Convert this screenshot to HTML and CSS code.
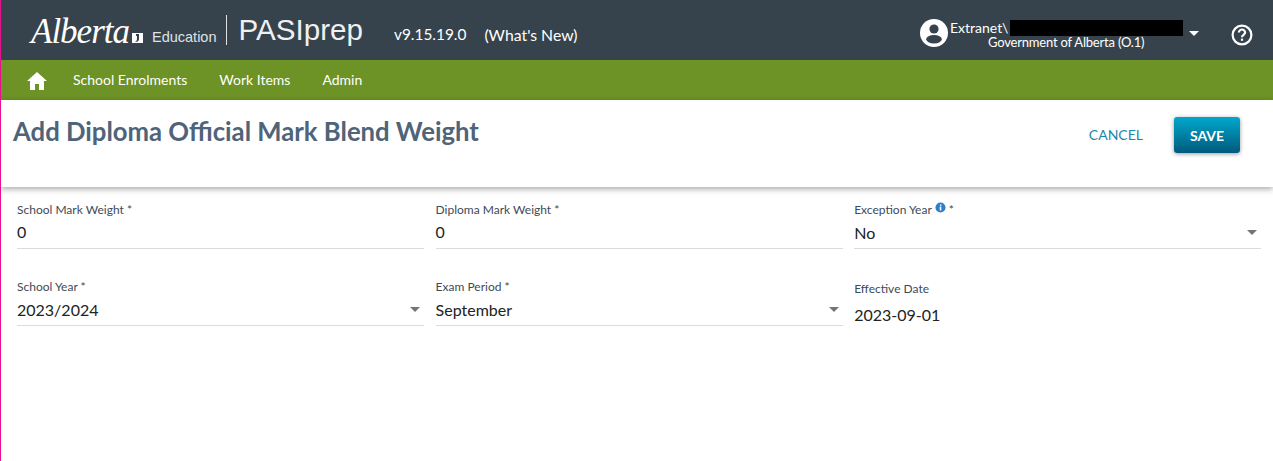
FILE: index.html
```html
<!DOCTYPE html>
<html lang="en">
<head>
  <meta charset="UTF-8" />
  <meta name="viewport" content="width=device-width, initial-scale=1.0" />
  <title>PASIprep</title>
  <link rel="stylesheet" href="styles.css">
</head>
<body>

  <header class="topbar">
    <div class="brand">
      <span class="logo-script">Alberta</span>
      <svg class="logo-mark" viewBox="0 0 11 10">
        <path d="M0 0h11v10H0z" fill="#fff"/>
        <path d="M4 1h3v5q0 3-4 3 2-1 2-3V3H4z" fill="#36434c"/>
      </svg>
      <span class="logo-ministry">Education</span>
      <span class="logo-divider"></span>
      <span class="logo-app">PASIprep</span>
    </div>
    <span class="version">v9.15.19.0</span>
    <span class="whats-new">(What's New)</span>

    <div class="account">
      <svg class="account-icon" viewBox="0 0 28 28">
        <circle cx="14" cy="14" r="14" fill="#fff"/>
        <circle cx="14" cy="10" r="4.6" fill="#36434c"/>
        <ellipse cx="14" cy="20.2" rx="7.8" ry="4.2" fill="#36434c"/>
      </svg>
      <div class="account-text">
        <div class="account-name">Extranet\<span class="redacted"></span></div>
        <div class="account-org">Government of Alberta (O.1)</div>
      </div>
      <span class="account-caret"></span>
    </div>

    <svg class="help-icon" viewBox="0 0 24 24">
      <circle cx="12" cy="12" r="9.4" fill="none" stroke="#fff" stroke-width="2.2"/>
      <path d="M8.9 9.6a3.1 3.1 0 0 1 6.2 0c0 2.2-3.1 2.3-3.1 4.6" fill="none" stroke="#fff" stroke-width="2.2"/>
      <rect x="10.9" y="15.6" width="2.2" height="2.2" fill="#fff"/>
    </svg>
  </header>

  <nav class="mainnav">
    <svg class="home-icon" viewBox="0 0 20 18">
      <path d="M10 0 0 9h3v9h5v-6h4v6h5V9h3z" fill="#fff"/>
    </svg>
    <a class="nav-link">School Enrolments</a>
    <a class="nav-link">Work Items</a>
    <a class="nav-link">Admin</a>
  </nav>

  <div class="page-head">
    <h1>Add Diploma Official Mark Blend Weight</h1>
    <div class="page-actions">
      <button class="btn-cancel">CANCEL</button>
      <button class="btn-save">SAVE</button>
    </div>
  </div>

  <main class="form-grid">
    <div class="field">
      <label>School Mark Weight *</label>
      <div class="field-value">0</div>
    </div>
    <div class="field">
      <label>Diploma Mark Weight *</label>
      <div class="field-value">0</div>
    </div>
    <div class="field">
      <label>Exception Year
        <svg class="info-icon" viewBox="0 0 12 12">
          <circle cx="6" cy="6" r="5.5" fill="#2f7fc4"/>
          <rect x="5.2" y="5" width="1.7" height="4.2" fill="#fff"/>
          <rect x="5.4" y="2.6" width="1.6" height="1.5" fill="#fff"/>
        </svg> *</label>
      <div class="field-value select">No</div>
    </div>
    <div class="field">
      <label>School Year *</label>
      <div class="field-value select">2023/2024</div>
    </div>
    <div class="field">
      <label>Exam Period *</label>
      <div class="field-value select">September</div>
    </div>
    <div class="field readonly">
      <label>Effective Date</label>
      <div class="field-value">2023-09-01</div>
    </div>
  </main>

</body>
</html>
```

FILE: styles.css
```css
body {
  margin: 0;
  height: 461px;
  overflow: hidden;
  font-family: 'Lato', sans-serif;
  background: #fff;
  color: #333;
  border-left: 1px solid #e6128f;
  box-sizing: border-box;
}

/* top bar */
.topbar {
  display: flex;
  align-items: center;
  height: 60px;
  box-sizing: border-box;
  padding-top: 8px;
  background: #36434c;
  color: #fff;
}
.brand {
  display: flex;
  align-items: center;
  margin-left: 30px;
  width: 363px;
}
.logo-script {
  font-family: 'Liberation Serif', serif;
  font-style: italic;
  font-size: 35px;
  letter-spacing: -1px;
  width: 101px;
  margin-top: -4px;
}
.logo-mark {
  width: 11px;
  height: 10px;
  margin: 7px 0 0 0;
}
.logo-ministry {
  margin: 5px 0 0 9px;
  font-family: 'Liberation Sans', sans-serif;
  font-size: 14.5px;
  color: #dfe3e5;
}
.logo-divider {
  width: 1px;
  height: 30px;
  margin: -8px 0 0 9px;
  background: #dfe3e5;
}
.logo-app {
  margin: -8px 0 0 12px;
  font-family: 'Liberation Sans', sans-serif;
  font-size: 29.6px;
  color: #eef0f1;
}
.version {
  font-size: 15.4px;
}
.whats-new {
  margin-left: 18px;
  font-size: 15.8px;
}
.account {
  display: flex;
  align-items: center;
  margin-left: auto;
}
.account-icon {
  width: 28px;
  height: 28px;
  margin-top: -2px;
}
.account-text {
  width: 240px;
  margin-left: 2px;
  font-size: 13px;
  line-height: 15px;
  margin-top: 1px;
}
.account-name {
  display: flex;
  align-items: center;
  height: 16px;
  font-size: 14px;
}
.redacted {
  width: 173px;
  height: 16px;
  margin: 1px 0 0 2px;
  background: #000;
}
.account-org {
  margin-left: 38px;
  letter-spacing: -0.2px;
}
.account-caret {
  width: 0;
  height: 0;
  margin: -2px 0 0 -1px;
  border-left: 5.5px solid transparent;
  border-right: 5.5px solid transparent;
  border-top: 5.5px solid #fff;
}
.help-icon {
  width: 24px;
  height: 24px;
  margin: 2px 19px 0 31px;
}

/* green nav */
.mainnav {
  display: flex;
  align-items: center;
  height: 40px;
  background: #6d9225;
  color: #fff;
}
.home-icon {
  width: 20px;
  height: 18px;
  margin: 2px 0 0 26px;
}
.nav-link {
  margin: -2px 0 0 32px;
  font-size: 14px;
}
.home-icon + .nav-link {
  margin-left: 26px;
}

/* page heading */
.page-head {
  display: flex;
  justify-content: space-between;
  height: 87px;
  box-sizing: border-box;
  padding: 15px 33px 0 12px;
  background: #fff;
  box-shadow: 0 2px 6px rgba(0,0,0,0.35);
  position: relative;
}
.page-head h1 {
  margin: 0;
  font-size: 25.7px;
  line-height: 32px;
  font-weight: 700;
  color: #4f6379;
}
.page-actions {
  display: flex;
  align-items: flex-start;
  padding-top: 2px;
}
.btn-cancel {
  margin: 9px 31px 0 0;
  padding: 0;
  border: none;
  background: none;
  font-family: inherit;
  font-size: 14px;
  line-height: 18px;
  color: #1d87a8;
}
.btn-save {
  width: 66px;
  height: 36px;
  padding: 0;
  border: none;
  border-radius: 3px;
  background: linear-gradient(#00a8cc, #005a7c);
  box-shadow: 0 1px 4px rgba(0,0,0,0.4);
  font-family: inherit;
  font-size: 14px;
  font-weight: 700;
  color: #fff;
}

/* form */
.form-grid {
  display: grid;
  grid-template-columns: repeat(3, 407px);
  column-gap: 11.6px;
  grid-auto-rows: 77px;
  padding: 15px 0 0 16px;
}
.field {
  display: flex;
  flex-direction: column;
}
.field label {
  font-size: 12px;
  line-height: 16px;
  color: #3d4a57;
}
.info-icon {
  width: 11px;
  height: 11px;
  vertical-align: 1px;
}
.field-value {
  display: flex;
  align-items: center;
  justify-content: space-between;
  height: 31px;
  padding-bottom: 3px;
  box-sizing: border-box;
  border-bottom: 1px solid #dcdcdc;
  font-size: 16px;
  color: #222;
}
.field-value.select {
  padding-bottom: 1px;
}
.field-value.select::after {
  content: "";
  width: 0;
  height: 0;
  margin-right: 4px;
  border-left: 5.5px solid transparent;
  border-right: 5.5px solid transparent;
  border-top: 5.5px solid #757575;
}
.field.readonly label {
  margin-top: 2px;
}
.field.readonly .field-value {
  border-bottom: none;
  height: 36px;
  padding-bottom: 1px;
}
```
